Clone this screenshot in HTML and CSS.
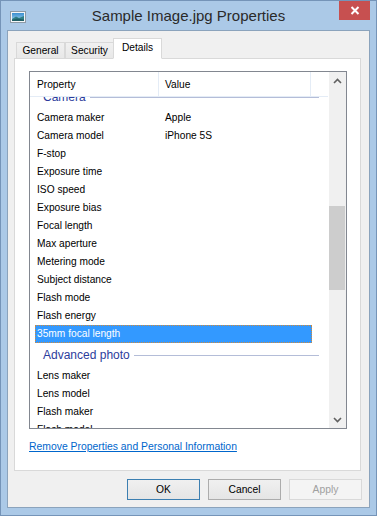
FILE: index.html
```html
<!DOCTYPE html>
<html>
<head>
<meta charset="utf-8">
<link rel="stylesheet" href="styles.css">
</head>
<body>
<div class="window">
  <div class="titlebar">
    <div class="tb-left">
      <svg class="app-icon" width="16" height="12" viewBox="0 0 16 12">
        <rect x="0.5" y="0.5" width="15" height="11" fill="#f4f6f8" stroke="#8d9aa6"/>
        <defs><linearGradient id="sky" x1="0" y1="0" x2="0" y2="1"><stop offset="0" stop-color="#3a8fd0"/><stop offset="1" stop-color="#a8d6f0"/></linearGradient></defs>
        <rect x="2" y="2" width="12" height="8" fill="url(#sky)"/>
        <path d="M2 8 L6 5.5 L9 7 L14 5 L14 10 L2 10 Z" fill="#2f7f86"/>
        <path d="M2 9 L7 7.5 L14 8.5 L14 10 L2 10 Z" fill="#1f5f66"/>
      </svg>
    </div>
    <div class="title">Sample Image.jpg Properties</div>
    <div class="tb-right">
      <div class="close">
        <svg width="10" height="9" viewBox="0 0 10 9"><path d="M1.5 1 L8.5 8 M8.5 1 L1.5 8" stroke="#fff" stroke-width="2"/></svg>
      </div>
    </div>
  </div>
  <div class="client">
    <div class="tabs">
      <div class="tab">General</div>
      <div class="tab">Security</div>
      <div class="tab active">Details</div>
    </div>
    <div class="panel">
      <div class="listview">
        <div class="lv-main">
          <div class="lv-header">
            <div class="hcol c1">Property</div>
            <div class="hcol c2">Value</div>
            <div class="hcol c3"></div>
          </div>
          <div class="lv-body">
            <div class="group first"><span>Camera</span><i class="gline"></i></div>
            <div class="row"><span>Camera maker</span><span>Apple</span></div>
            <div class="row"><span>Camera model</span><span>iPhone 5S</span></div>
            <div class="row"><span>F-stop</span><span></span></div>
            <div class="row"><span>Exposure time</span><span></span></div>
            <div class="row"><span>ISO speed</span><span></span></div>
            <div class="row"><span>Exposure bias</span><span></span></div>
            <div class="row"><span>Focal length</span><span></span></div>
            <div class="row"><span>Max aperture</span><span></span></div>
            <div class="row"><span>Metering mode</span><span></span></div>
            <div class="row"><span>Subject distance</span><span></span></div>
            <div class="row"><span>Flash mode</span><span></span></div>
            <div class="row"><span>Flash energy</span><span></span></div>
            <div class="row selected"><span>35mm focal length</span><span></span></div>
            <div class="group"><span>Advanced photo</span><i class="gline"></i></div>
            <div class="row"><span>Lens maker</span><span></span></div>
            <div class="row"><span>Lens model</span><span></span></div>
            <div class="row"><span>Flash maker</span><span></span></div>
            <div class="row"><span>Flash model</span><span></span></div>
          </div>
        </div>
        <div class="scrollbar">
          <div class="sb-btn">
            <svg width="9" height="6" viewBox="0 0 9 6"><path d="M1 5 L4.5 1.5 L8 5" fill="none" stroke="#606060" stroke-width="1.6"/></svg>
          </div>
          <div class="sb-track"><div class="sb-thumb"></div></div>
          <div class="sb-btn">
            <svg width="9" height="6" viewBox="0 0 9 6"><path d="M1 1 L4.5 4.5 L8 1" fill="none" stroke="#606060" stroke-width="1.6"/></svg>
          </div>
        </div>
      </div>
      <a class="link" href="#">Remove Properties and Personal Information</a>
    </div>
    <div class="buttons">
      <div class="btn default">OK</div>
      <div class="btn">Cancel</div>
      <div class="btn disabled">Apply</div>
    </div>
  </div>
</div>
</body>
</html>
```
FILE: styles.css
```css
html, body {
  margin: 0;
  padding: 0;
}
body {
  width: 377px;
  height: 516px;
  overflow: hidden;
  font-family: "Liberation Sans", Arial, sans-serif;
  font-size: 10.2px;
  color: #000;
}
.window {
  box-sizing: border-box;
  width: 377px;
  height: 516px;
  border: 1px solid #7594b8;
  background: #abc9e7;
  display: flex;
  flex-direction: column;
}
.titlebar {
  height: 29px;
  flex: none;
  display: grid;
  grid-template-columns: 37px 1fr 37px;
}
.tb-left {
  padding: 10px 0 0 9px;
}
.app-icon {
  display: block;
}
.title {
  text-align: center;
  font-size: 15px;
  line-height: 30px;
  color: #2a2a2a;
  white-space: nowrap;
}
.close {
  width: 31px;
  height: 19px;
  background: #c75050;
  display: flex;
  align-items: center;
  justify-content: center;
}
.close svg {
  display: block;
}
.client {
  flex: none;
  box-sizing: border-box;
  height: 478px;
  margin: 0 6px 7px 6px;
  border: 1px solid #8ba3bc;
  background: #f0f0f0;
  display: flex;
  flex-direction: column;
}
.tabs {
  height: 28px;
  flex: none;
  display: flex;
  align-items: flex-end;
  padding-left: 8px;
  margin-bottom: -1px;
  position: relative;
  z-index: 1;
}
.tab {
  box-sizing: border-box;
  width: 49px;
  height: 17px;
  border: 1px solid #d9d9d9;
  background: linear-gradient(#f0f0f0, #e8e8e8);
  text-align: center;
  line-height: 15px;
}
.tab.active {
  height: 21px;
  margin-left: -1px;
  background: #fff;
  border-bottom-color: #fff;
  line-height: 17px;
}
.panel {
  flex: none;
  box-sizing: border-box;
  height: 413px;
  margin: 0 8px 0 6px;
  border: 1px solid #d9d9d9;
  background: #fff;
  padding: 12px 13px 0 14px;
}
.listview {
  box-sizing: border-box;
  width: 318px;
  height: 358px;
  border: 1px solid #828790;
  display: flex;
}
.lv-main {
  width: 299px;
  display: flex;
  flex-direction: column;
}
.lv-header {
  height: 24px;
  flex: none;
  display: flex;
  border-bottom: 1px solid #e4ecf6;
  margin-right: 1px;
}
.hcol {
  box-sizing: border-box;
  height: 24px;
  line-height: 25px;
  white-space: nowrap;
}
.hcol.c1 {
  width: 129px;
  padding-left: 7px;
  border-right: 1px solid #e4ecf6;
}
.hcol.c2 {
  width: 152px;
  padding-left: 6px;
  border-right: 1px solid #e4ecf6;
}
.hcol.c3 {
  flex: 1;
}
.lv-body {
  flex: 1;
  overflow: hidden;
}
.group {
  height: 24px;
  display: flex;
  align-items: center;
  padding-left: 13px;
  margin-right: 10px;
  font-size: 12px;
  color: #2c3c9c;
}
.group.first {
  margin-top: -12px;
}
.gline {
  flex: 1;
  height: 1px;
  margin-left: 4px;
  background: #b4bdd8;
}
.row {
  box-sizing: border-box;
  margin-left: 5px;
  width: 277px;
  height: 18px;
  line-height: 18px;
  padding-left: 2px;
  display: grid;
  grid-template-columns: 128px 1fr;
  white-space: nowrap;
}
.row.selected {
  background: #3399ff;
  color: #fff;
  border: 1px dotted #d08a3a;
  padding-left: 1px;
  line-height: 16px;
}
.scrollbar {
  width: 17px;
  display: flex;
  flex-direction: column;
  background: #f0f0f0;
}
.sb-btn {
  height: 17px;
  flex: none;
  display: flex;
  align-items: center;
  justify-content: center;
}
.sb-btn svg {
  display: block;
}
.sb-track {
  flex: 1;
}
.sb-thumb {
  margin-top: 117px;
  width: 16px;
  height: 84px;
  background: #cdcdcd;
}
.link {
  display: block;
  margin-top: 11px;
  font-size: 10.4px;
  line-height: 14px;
  color: #0066cc;
  text-decoration: underline;
  white-space: nowrap;
}
.buttons {
  flex: none;
  display: flex;
  justify-content: flex-end;
  gap: 8px;
  margin-top: 8px;
  padding-right: 7px;
}
.btn {
  box-sizing: border-box;
  width: 73px;
  height: 21px;
  border: 1px solid #acacac;
  background: linear-gradient(#f0f0f0, #e5e5e5);
  text-align: center;
  line-height: 19px;
  font-size: 10.3px;
}
.btn.default {
  border-color: #3c7fb1;
}
.btn.disabled {
  border-color: #d9d9d9;
  background: #f4f4f4;
  color: #a0a0a0;
}
```
